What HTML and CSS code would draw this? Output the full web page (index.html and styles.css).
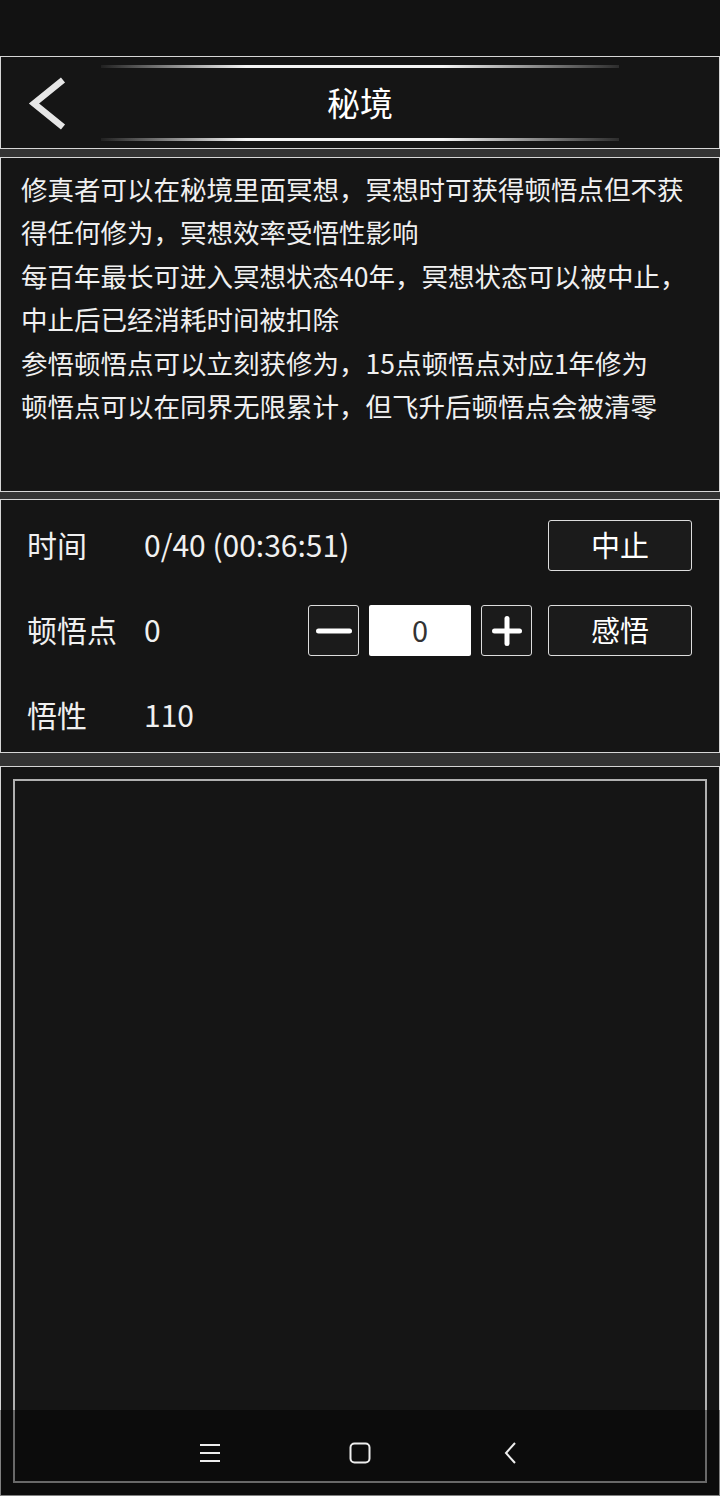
FILE: index.html
```html
<!DOCTYPE html>
<html lang="zh">
<head>
    <meta charset="UTF-8">
    <meta name="viewport" content="width=device-width, initial-scale=1.0">
    <title>秘境</title>
    <link rel="stylesheet" href="styles.css">
</head>
<body>

    <div class="status-bar"></div>

    <div class="page">
        <!-- Header -->
        <div class="panel header">
            <div class="back">
                <svg width="100" height="91" viewBox="0 0 100 91">
                    <polyline points="62,23 33,46.5 62,70" fill="none" stroke="#e6e6e6" stroke-width="6.5"/>
                </svg>
            </div>
            <div class="header-center">
                <div class="glow-line"></div>
                <div class="title">秘境</div>
                <div class="glow-line"></div>
            </div>
            <div class="header-side"></div>
        </div>

        <!-- Description -->
        <div class="panel desc">
            <p>修真者可以在秘境里面冥想，冥想时可获得顿悟点但不获得任何修为，冥想效率受悟性影响</p>
            <p>每百年最长可进入冥想状态40年，冥想状态可以被中止，中止后已经消耗时间被扣除</p>
            <p>参悟顿悟点可以立刻获修为，15点顿悟点对应1年修为</p>
            <p>顿悟点可以在同界无限累计，但飞升后顿悟点会被清零</p>
        </div>

        <!-- Controls -->
        <div class="panel controls">
            <div class="row">
                <div class="label">时间</div>
                <div class="value">0/40 (00:36:51)</div>
                <button class="btn">中止</button>
            </div>
            <div class="row">
                <div class="label">顿悟点</div>
                <div class="value">0</div>
                <div class="stepper">
                    <button class="step-btn">
                        <svg width="36" height="36" viewBox="0 0 36 36"><line x1="2.5" y1="18" x2="33.5" y2="18" stroke="#fff" stroke-width="5" stroke-linecap="round"/></svg>
                    </button>
                    <div class="amount">0</div>
                    <button class="step-btn">
                        <svg width="30" height="30" viewBox="0 0 30 30"><line x1="2.5" y1="15" x2="27.5" y2="15" stroke="#fff" stroke-width="5" stroke-linecap="round"/><line x1="15" y1="2.5" x2="15" y2="27.5" stroke="#fff" stroke-width="5" stroke-linecap="round"/></svg>
                    </button>
                </div>
                <button class="btn">感悟</button>
            </div>
            <div class="row">
                <div class="label">悟性</div>
                <div class="value">110</div>
            </div>
        </div>

        <!-- Log -->
        <div class="panel log">
            <div class="log-box"></div>
        </div>
    </div>

    <!-- System navigation bar -->
    <div class="nav-bar">
        <div class="nav-slot">
            <svg width="22" height="20" viewBox="0 0 22 20">
                <line x1="1" y1="2" x2="21" y2="2" stroke="#eee" stroke-width="2"/>
                <line x1="1" y1="10" x2="21" y2="10" stroke="#eee" stroke-width="2"/>
                <line x1="1" y1="18" x2="21" y2="18" stroke="#eee" stroke-width="2"/>
            </svg>
        </div>
        <div class="nav-slot">
            <svg width="22" height="22" viewBox="0 0 22 22">
                <rect x="1.5" y="1.5" width="19" height="19" rx="4" fill="none" stroke="#eee" stroke-width="2"/>
            </svg>
        </div>
        <div class="nav-slot">
            <svg width="14" height="22" viewBox="0 0 14 22">
                <polyline points="12,1 3,11 12,21" fill="none" stroke="#eee" stroke-width="2"/>
            </svg>
        </div>
    </div>

</body>
</html>
```

FILE: styles.css
```css
/* Base */
body {
    margin: 0;
    background-color: #121212;
    font-family: "Noto Sans CJK SC", "Noto Sans", sans-serif;
    color: #f0f0f0;
}
.status-bar {
    height: 56px;
    background-color: #121212;
}
.page {
    background-color: #333;
}
.panel {
    background-color: #151515;
    border: 1px solid #d6d6d6;
    box-sizing: border-box;
}

/* Header */
.header {
    display: flex;
    height: 93px;
}
.back,
.header-side {
    width: 100px;
    flex-shrink: 0;
}
.back svg {
    display: block;
}
.header-center {
    width: 518px;
    padding: 8px 0 7px;
    display: flex;
    flex-direction: column;
}
.glow-line {
    height: 3px;
    background: linear-gradient(to right, rgba(255,255,255,0.05), #f4f4f4 28%, #f4f4f4 66%, rgba(255,255,255,0.1));
}
.title {
    height: 70px;
    line-height: 68px;
    text-align: center;
    font-size: 33px;
    color: #fff;
}

/* Description */
.desc {
    margin-top: 8px;
    height: 335px;
    padding: 9px 20px 0 20px;
    font-size: 26.5px;
    line-height: 43.4px;
}
.desc p {
    margin: 0;
}

/* Controls */
.controls {
    margin-top: 7px;
    height: 254px;
    padding: 20px 27px 0 26px;
    display: flex;
    flex-direction: column;
    gap: 34px;
}
.row {
    display: flex;
    align-items: center;
    height: 51px;
    font-size: 30px;
}
.label {
    width: 117px;
    padding-bottom: 4px;
}
.value {
    flex: 1;
    padding-bottom: 4px;
}
.btn {
    width: 144px;
    height: 51px;
    background-color: #1b1b1b;
    border: 1.5px solid #ddd;
    border-radius: 3px;
    color: #fff;
    font-family: inherit;
    font-size: 29px;
    padding: 0 0 4px;
}
.stepper {
    display: flex;
    gap: 10px;
    margin-right: 16px;
}
.step-btn {
    width: 51px;
    height: 51px;
    background-color: #1b1b1b;
    border: 1.5px solid #ddd;
    border-radius: 3px;
    padding: 0;
    display: flex;
    align-items: center;
    justify-content: center;
}
.amount {
    width: 102px;
    height: 51px;
    line-height: 48px;
    background-color: #fff;
    border-radius: 2px;
    color: #333;
    text-align: center;
    font-size: 29px;
}

/* Log */
.log {
    margin-top: 13px;
    height: 730px;
    padding: 12px;
}
.log-box {
    height: 100%;
    border: 2px solid #b0b0b0;
    box-sizing: border-box;
}

/* Navigation bar */
.nav-bar {
    position: fixed;
    left: 0;
    right: 0;
    bottom: 0;
    height: 86px;
    background-color: rgba(0, 0, 0, 0.4);
    display: flex;
    justify-content: center;
    align-items: center;
}
.nav-slot {
    width: 150px;
    display: flex;
    justify-content: center;
}
.nav-slot svg {
    display: block;
}
```
